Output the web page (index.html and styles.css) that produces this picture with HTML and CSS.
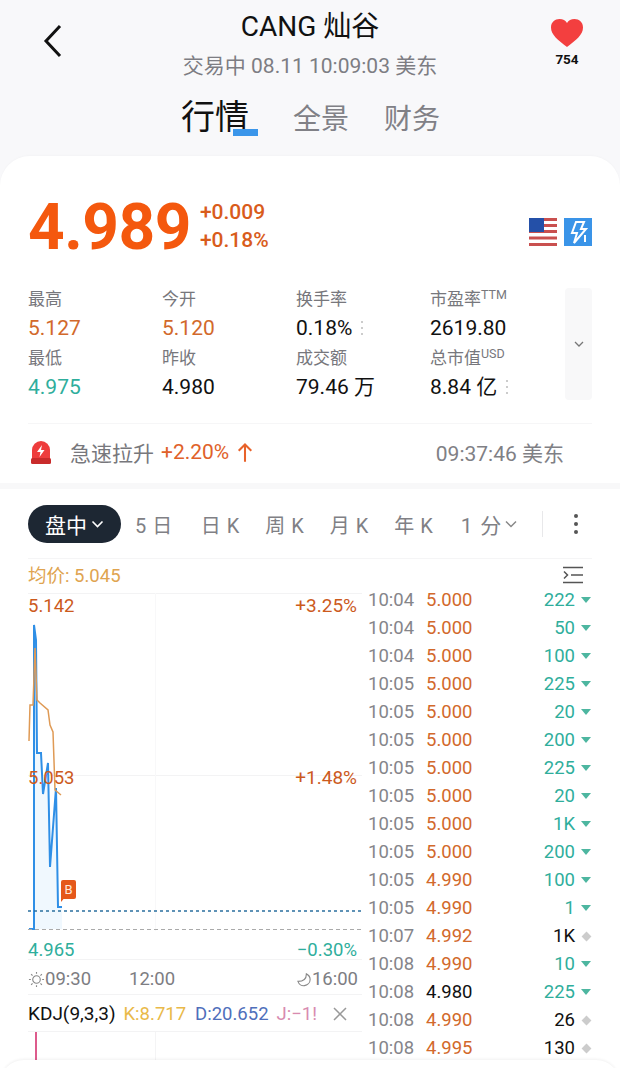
FILE: index.html
```html
<!DOCTYPE html>
<html lang="zh">
<head>
<meta charset="utf-8">
<title>CANG 灿谷</title>
<link rel="stylesheet" href="styles.css">
</head>
<body>
<div class="screen">
  <header class="head">
    <div class="head-top">
      <svg class="back" viewBox="0 0 20 34" width="20" height="34"><path d="M17 2 3 17l14 15" fill="none" stroke="#111" stroke-width="3"/></svg>
      <div class="title-box">
        <div class="title">CANG 灿谷</div>
        <div class="subtitle">交易中 08.11 10:09:03 美东</div>
      </div>
      <div class="fav">
        <svg viewBox="0 0 34 30" width="34" height="30"><path d="M17 29C8 22 1 17 1 9.500 1 4 5 1 9.500 1 13 1 15.500 2.500 17 5 18.500 2.500 21 1 24.500 1 29 1 33 4 33 9.500 33 17 26 22 17 29Z" fill="#f33f3f"/></svg>
        <span class="fav-num">754</span>
      </div>
    </div>
    <nav class="main-tabs">
      <span class="main-tab active">行情<i class="tab-mark"></i></span>
      <span class="main-tab">全景</span>
      <span class="main-tab">财务</span>
    </nav>
  </header>

  <main class="card">
    <section class="quote">
      <div class="price">4.989</div>
      <div class="change"><span>+0.009</span><span>+0.18%</span></div>
      <div class="badges">
        <svg viewBox="0 0 28 28" width="28" height="28">
          <rect width="28" height="28" fill="#fff"/>
          <g fill="#c9504f"><rect y="0" width="28" height="3"/><rect y="6" width="28" height="3"/><rect y="12" width="28" height="3"/><rect y="18.500" width="28" height="3"/><rect y="25" width="28" height="3"/></g>
          <rect width="15" height="14" fill="#2450a8"/>
        </svg>
        <svg viewBox="0 0 28 28" width="28" height="28">
          <rect width="28" height="28" fill="#3a94e8"/>
          <path d="M12 4h8l-3 7h5L10 25l3-10H8Z" fill="none" stroke="#fff" stroke-width="2"/>
          <path d="M21 17v7" stroke="#fff" stroke-width="2"/>
        </svg>
      </div>
    </section>

    <section class="stats">
      <div class="stat-grid">
        <div class="stat"><span class="lbl">最高</span><span class="val up">5.127</span></div>
        <div class="stat"><span class="lbl">今开</span><span class="val up">5.120</span></div>
        <div class="stat"><span class="lbl">换手率</span><span class="val">0.18%<i class="dots"></i></span></div>
        <div class="stat"><span class="lbl">市盈率<sup>TTM</sup></span><span class="val">2619.80</span></div>
        <div class="stat"><span class="lbl">最低</span><span class="val down">4.975</span></div>
        <div class="stat"><span class="lbl">昨收</span><span class="val">4.980</span></div>
        <div class="stat"><span class="lbl">成交额</span><span class="val">79.46 万</span></div>
        <div class="stat"><span class="lbl">总市值<sup>USD</sup></span><span class="val">8.84 亿<i class="dots"></i></span></div>
      </div>
      <div class="expand">
        <svg viewBox="0 0 10 6" width="10" height="6"><path d="M1 1l4 4 4-4" fill="none" stroke="#777" stroke-width="1.300"/></svg>
      </div>
    </section>

    <section class="alert">
      <svg class="alert-icon" viewBox="0 0 20 24" width="20" height="24">
        <path d="M1 19V10a9 9 0 0 1 18 0v9Z" fill="#ee3d3d"/>
        <rect y="18" width="20" height="6" rx="1.500" fill="#c92b2b"/>
        <path d="M11 5 6 12h3.500L8.500 17l5-7H10Z" fill="#fff"/>
      </svg>
      <span class="alert-name">急速拉升</span>
      <span class="alert-pct">+2.20%</span>
      <svg class="alert-arrow" viewBox="0 0 14 18" width="16" height="21"><path d="M7 17V2M1.500 7.500 7 2l5.500 5.500" fill="none" stroke="#e8622a" stroke-width="1.800"/></svg>
      <span class="alert-time">09:37:46 美东</span>
    </section>

    <div class="gap-bar"></div>

    <section class="periods">
      <div class="pill">盘中<svg viewBox="0 0 12 8" width="13" height="8"><path d="M1 1.500 6 6.500l5-5" fill="none" stroke="#fff" stroke-width="1.600"/></svg></div>
      <span class="period p-5">5 日</span>
      <span class="period">日 K</span>
      <span class="period">周 K</span>
      <span class="period">月 K</span>
      <span class="period">年 K</span>
      <span class="period p-min">1 分<svg viewBox="0 0 12 8" width="12" height="8"><path d="M1 1.500 6 6.500l5-5" fill="none" stroke="#888" stroke-width="1.500"/></svg></span>
      <i class="period-sep"></i>
      <span class="more"><i></i><i></i><i></i></span>
    </section>

    <section class="market">
      <div class="chart">
        <div class="avg">均价: 5.045</div>
        <div class="plot">
          <svg class="plot-svg" viewBox="0 0 334 338" width="334" height="338">
            <path d="M0 .5H334M0 182.500H334" stroke="#f3f3f4"/>
            <path d="M127.500 0V338" stroke="#f8f8f9"/>
            <path d="M6 336V32L8 47 9 160H13L15 201 20 170 22 274 28 195 30 314H34V336Z" fill="#f0f8fe"/>
            <path d="M1 336H6V32L8 47 9 160H13L15 201 20 170 22 274 28 195 30 314H34" fill="none" stroke="#2f8fe6" stroke-width="2"/>
            <path d="M1 148 2 112H5L7 55 9 107 12 110 20 117 22 132 25 139 27 197 33 202" fill="none" stroke="#df9a55" stroke-width="1.500"/>
            <path d="M0 318H334" stroke="#2a6f9e" stroke-width="1.500" stroke-dasharray="3 3"/>
            <path d="M0 336.500H334" stroke="#aaa" stroke-dasharray="4 3"/>
          </svg>
          <span class="tag tl up-s">5.142</span>
          <span class="tag tr up-s">+3.25%</span>
          <span class="tag ml up-s">5.053</span>
          <span class="tag mr up-s">+1.48%</span>
          <span class="b-mark">B</span>
        </div>
        <div class="low-row"><span>4.965</span><span>−0.30%</span></div>
        <div class="time-axis">
          <span class="t-start"><svg viewBox="0 0 18 18" width="17" height="17"><circle cx="9" cy="9" r="4" fill="none" stroke="#888" stroke-width="1.200"/><path d="M9 1v2M9 15v2M1 9h2M15 9h2M3.300 3.300l1.500 1.500M13.200 13.200l1.500 1.500M3.300 14.700l1.500-1.500M13.200 4.800l1.500-1.500" stroke="#888" stroke-width="1.200"/></svg>09:30</span>
          <span class="t-mid">12:00</span>
          <span class="t-end"><svg viewBox="0 0 16 16" width="15" height="15"><path d="M10 2c0 5-3 8-9 8 1 3 4 5 7 4.500s6-3 6-6.500c0-3-2-5-4-6Z" fill="none" stroke="#888" stroke-width="1.200"/></svg>16:00</span>
        </div>
        <div class="kdj">
          <span class="kdj-name">KDJ(9,3,3)</span>
          <span class="k">K:8.717</span>
          <span class="d">D:20.652</span>
          <span class="j">J:−1!</span>
          <svg class="kdj-x" viewBox="0 0 16 16" width="16" height="16"><path d="M2 2l12 12M14 2 2 14" stroke="#999" stroke-width="1.500"/></svg>
        </div>
        <div class="kdj-plot"><i class="kdj-bar"></i><i class="kdj-grid"></i></div>
      </div>

      <div class="trades">
        <div class="trade-icon">
          <svg viewBox="0 0 22 18" width="22" height="18"><path d="M1 1.500H21M9 9H21M1 16.500H21" stroke="#555" stroke-width="1.500"/><path d="M2 5.500 5.500 9 2 12.500" fill="none" stroke="#555" stroke-width="1.500"/></svg>
        </div>
        <ul class="trade-list">
          <li><span class="tm">10:04</span><span class="pr up">5.000</span><span class="vol down">222</span><i class="tri"></i></li>
          <li><span class="tm">10:04</span><span class="pr up">5.000</span><span class="vol down">50</span><i class="tri"></i></li>
          <li><span class="tm">10:04</span><span class="pr up">5.000</span><span class="vol down">100</span><i class="tri"></i></li>
          <li><span class="tm">10:05</span><span class="pr up">5.000</span><span class="vol down">225</span><i class="tri"></i></li>
          <li><span class="tm">10:05</span><span class="pr up">5.000</span><span class="vol down">20</span><i class="tri"></i></li>
          <li><span class="tm">10:05</span><span class="pr up">5.000</span><span class="vol down">200</span><i class="tri"></i></li>
          <li><span class="tm">10:05</span><span class="pr up">5.000</span><span class="vol down">225</span><i class="tri"></i></li>
          <li><span class="tm">10:05</span><span class="pr up">5.000</span><span class="vol down">20</span><i class="tri"></i></li>
          <li><span class="tm">10:05</span><span class="pr up">5.000</span><span class="vol down">1K</span><i class="tri"></i></li>
          <li><span class="tm">10:05</span><span class="pr up">5.000</span><span class="vol down">200</span><i class="tri"></i></li>
          <li><span class="tm">10:05</span><span class="pr up">4.990</span><span class="vol down">100</span><i class="tri"></i></li>
          <li><span class="tm">10:05</span><span class="pr up">4.990</span><span class="vol down">1</span><i class="tri"></i></li>
          <li><span class="tm">10:07</span><span class="pr up">4.992</span><span class="vol">1K</span><i class="dia"></i></li>
          <li><span class="tm">10:08</span><span class="pr up">4.990</span><span class="vol down">10</span><i class="tri"></i></li>
          <li><span class="tm">10:08</span><span class="pr">4.980</span><span class="vol down">225</span><i class="tri"></i></li>
          <li><span class="tm">10:08</span><span class="pr up">4.990</span><span class="vol">26</span><i class="dia"></i></li>
          <li><span class="tm">10:08</span><span class="pr up">4.995</span><span class="vol">130</span><i class="dia"></i></li>
        </ul>
      </div>
    </section>
  </main>
  <div class="bottom-sheet"></div>
</div>
</body>
</html>
```

FILE: styles.css
```css
* { box-sizing: border-box; }
html, body { margin: 0; padding: 0; }
body {
  width: 620px;
  height: 1068px;
  overflow: hidden;
  background: #f8f8fa;
  color: #111;
  font-family: Roboto, "Noto Sans CJK SC", sans-serif;
}
i { display: block; font-style: normal; }
ul { list-style: none; margin: 0; padding: 0; }

.screen { position: relative; width: 620px; height: 1068px; overflow: hidden; }

/* header */
.head { height: 156px; }
.head-top { display: flex; align-items: flex-start; height: 92px; }
.back { margin: 24px 0 0 43px; flex: none; }
.title-box { width: 487px; text-align: center; flex: none; padding-left: 7px; }
.title { font-size: 28px; line-height: 30px; margin-top: 12px; color: #111; }
.subtitle { font-size: 21px; line-height: 28px; margin-top: 10px; color: #7d7d83; }
.fav { display: flex; flex-direction: column; align-items: center; margin: 18px 0 0 0; width: 34px; }
.fav-num { font-size: 13.500px; font-weight: 700; line-height: 16px; margin-top: 3px; color: #111; }
.main-tabs { display: flex; align-items: baseline; padding-left: 181px; height: 50px; }
.main-tab { position: relative; font-size: 28px; line-height: 50px; color: #808086; margin-right: 35px; }
.main-tab.active { font-size: 34px; color: #111; margin-right: 44px; }
.tab-mark { position: absolute; left: 52px; top: 37px; width: 25px; height: 7px; background: #3b96ea; }

/* card */
.card {
  height: 912px;
  background: #fff;
  border-radius: 30px 30px 0 0;
  box-shadow: 0 -1px 2px rgba(0,0,0,.02);
}
.quote { display: flex; align-items: center; height: 132px; padding: 8px 28px 0 28px; }
.price { font-size: 64px; font-weight: 700; line-height: 70px; margin-top: 4px; color: #f4580e; letter-spacing: -.5px; }
.change { display: flex; flex-direction: column; margin-left: 9px; font-size: 21px; font-weight: 500; line-height: 28px; color: #d95c1b; }
.badges { display: flex; gap: 7px; margin-left: auto; margin-top: 12px; }

.stats { display: flex; align-items: flex-start; padding: 0 28px; height: 114px; margin-top: -1px; }
.stat-grid { display: grid; grid-template-columns: 134px 134px 134px 135px; grid-auto-rows: 59px; width: 537px; }
.stat { display: flex; flex-direction: column; }
.lbl { font-size: 17px; line-height: 24px; color: #77777c; }
.lbl sup { font-size: 12.500px; line-height: 0; vertical-align: 6px; }
.val { display: flex; align-items: center; font-size: 21px; line-height: 30px; margin-top: 2px; color: #111; }
.val.up, .pr.up { color: #d2692b; }
.val.down, .vol.down { color: #2fae9c; }
.dots { width: 2px; height: 14px; margin-left: 9px; background: repeating-linear-gradient(#ccc 0 2px, transparent 2px 6px); }
.expand { display: flex; align-items: center; justify-content: center; width: 27px; height: 112px; margin-top: 1px; background: #f8f8f9; border-radius: 4px; }

.alert { display: flex; align-items: center; height: 60px; margin: 22px 28px 0; padding: 0 0 3px 3px; border-top: 1px solid #f6f6f7; }
.alert-icon { flex: none; }
.alert-name { font-size: 21px; color: #77777c; margin-left: 19px; }
.alert-pct { font-size: 21px; color: #e0612a; margin-left: 7px; }
.alert-arrow { margin-left: 8px; }
.alert-time { font-size: 21px; color: #808085; margin-left: auto; margin-right: 28px; }

.gap-bar { height: 6px; background: #f8f8f9; }

.periods { display: flex; align-items: center; height: 70px; margin: 0 28px; border-bottom: 1px solid #f5f5f6; padding-top: 1px; color: #808085; font-size: 20px; }
.pill { display: flex; align-items: center; justify-content: center; gap: 4px; width: 93px; height: 38px; border-radius: 19px; background: #1d2733; color: #fff; font-size: 21px; flex: none; }
.period { white-space: nowrap; margin-right: 25.500px; letter-spacing: .5px; }
.p-5 { margin-left: 14px; margin-right: 28px; }
.p-min { display: flex; align-items: center; gap: 3px; margin-right: 25px; margin-left: 2px; letter-spacing: 1.200px; font-size: 21px; }
.period-sep { width: 1px; height: 26px; background: #e8e8ea; flex: none; }
.more { display: flex; flex-direction: column; gap: 4px; margin-left: 31px; }
.more i { width: 4px; height: 4px; border-radius: 2px; background: #555; }

.market { display: flex; padding-left: 28px; }
.chart { width: 334px; flex: none; }
.avg { height: 34px; line-height: 34px; font-size: 18.500px; color: #e0a450; }
.plot { position: relative; height: 338px; }
.plot-svg { position: absolute; left: 0; top: 0; display: block; }
.tag { position: absolute; font-size: 18.500px; line-height: 22px; }
.up-s { color: #cc5a1d; }
.tl { left: 0; top: 2px; }
.tr { right: 5px; top: 2px; font-size: 19px; }
.ml { left: 0; top: 174px; }
.mr { right: 5px; top: 174px; font-size: 19px; }
.b-mark { position: absolute; left: 33px; top: 287px; width: 15px; height: 19px; border-radius: 2px; background: #e5581a; color: #ffe9d8; font-size: 13px; line-height: 19px; text-align: center; }
.b-mark::after { content: ""; position: absolute; left: 0; top: 16px; border-top: 6px solid #e5581a; border-right: 5px solid transparent; }
.low-row { display: flex; justify-content: space-between; height: 29px; padding-right: 5px; line-height: 39px; font-size: 18.500px; color: #2fae9c; border-bottom: 1px solid #f3f3f4; }
.time-axis { display: flex; height: 35px; align-items: center; font-size: 18.500px; color: #7d7d82; padding: 4px 4px 0 0; border-bottom: 1px solid #f3f3f4; }
.t-start, .t-end { display: flex; align-items: center; }
.t-mid { margin-left: 38px; }
.t-end { margin-left: auto; }
.kdj { display: flex; align-items: center; height: 37px; padding-top: 1px; font-size: 18.500px; border-bottom: 1px solid #f3f3f4; white-space: nowrap; overflow: hidden; }
.kdj-name { color: #111; font-size: 19px; }
.k { color: #e9b949; margin-left: 8px; }
.d { color: #4f6fbb; margin-left: 9px; }
.j { color: #d88bb0; margin-left: 8px; }
.kdj-x { margin-left: 15px; flex: none; }
.kdj-plot { position: relative; height: 30px; }
.kdj-bar { position: absolute; left: 7px; top: 0; width: 2px; height: 29px; background: #dd5b8c; }
.kdj-grid { position: absolute; left: 127px; top: 0; width: 1px; height: 29px; background: #f4f4f5; }

.trades { width: 224px; margin-left: 6px; flex: none; }
.trade-icon { display: flex; justify-content: flex-end; height: 27px; padding: 7px 8px 0 0; }
.trade-list li { display: flex; align-items: center; height: 28px; font-size: 18.500px; }
.tm { width: 58px; color: #85858a; }
.pr { width: 50px; color: #111; }
.vol { width: 99px; text-align: right; color: #111; }
.tri { margin-left: 6px; width: 0; height: 0; border-left: 5px solid transparent; border-right: 5px solid transparent; border-top: 6px solid #4db6a0; }
.dia { margin-left: 8px; width: 7px; height: 7px; background: #ccc; transform: rotate(45deg); }

.bottom-sheet { position: absolute; left: 0; right: 0; bottom: -30px; height: 38px; background: #fff; border-radius: 24px 24px 0 0; box-shadow: 0 -1px 3px rgba(0,0,0,.06); }
```
